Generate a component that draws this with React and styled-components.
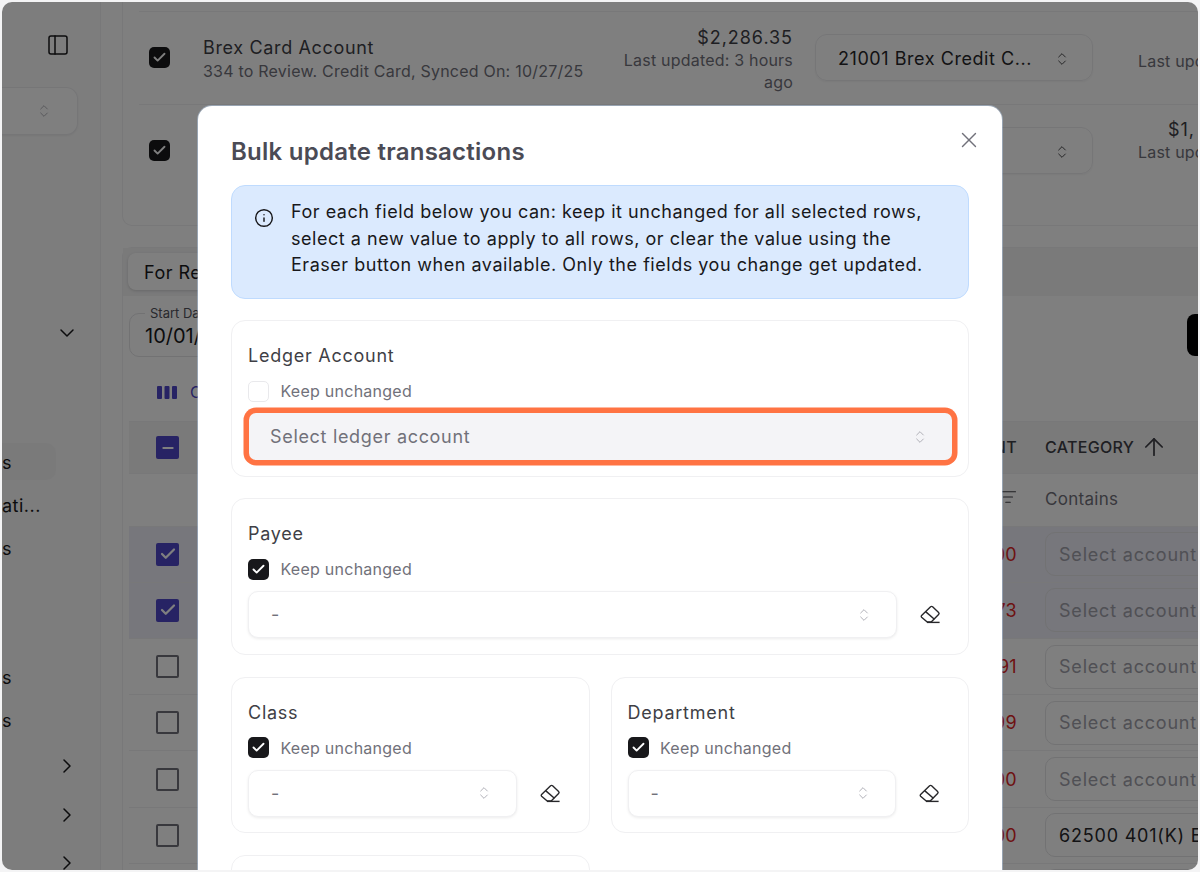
import styled, { createGlobalStyle } from "styled-components";
import { ArrowUp, Check, ChevronDown, ChevronRight, ChevronsUpDown, Info, ListFilter, Minus, PanelLeft, X } from "lucide-react";

const GlobalStyle = createGlobalStyle`
    html, body {
        margin: 0;
        padding: 0;
        background: #f4f4f5;
    }
    * {
        box-sizing: border-box;
    }
    body {
        font-family: Inter, "Liberation Sans", sans-serif;
        color: #18181b;
    }
`;

const Frame = styled.div`
    width: 1200px;
    height: 872px;
    padding: 2px;
    overflow: hidden;
`;

const Window = styled.div`
    position: relative;
    height: 868px;
    display: flex;
    overflow: hidden;
    border-radius: 10px;
    background: #fff;
`;

const Sidebar = styled.aside`
    width: 99px;
    flex-shrink: 0;
    border-right: 1px solid #f0f0f2;
    display: flex;
    flex-direction: column;
    background: #fafafa;
    font-size: 18px;
    letter-spacing: 0.5px;
    & > * {
        flex-shrink: 0;
    }
`;

const SidebarToggle = styled.div`
    height: 34px;
    margin-top: 26px;
    padding-left: 44px;
    display: flex;
    align-items: center;
`;

const SidebarSelect = styled.div`
    height: 48px;
    width: 76px;
    margin-top: 25px;
    padding-right: 25px;
    display: flex;
    align-items: center;
    justify-content: flex-end;
    background: #fff;
    border: 1px solid #ececef;
    border-left: none;
    border-radius: 0 12px 12px 0;
    box-shadow: 0 1px 2px rgba(0, 0, 0, 0.05);
    color: #a1a1aa;
`;

const SidebarChevron = styled.div`
    height: 24px;
    margin-top: ${(p) => p.$top || 0}px;
    padding-left: 53px;
    display: flex;
    align-items: center;
`;

const NavItem = styled.div`
    height: 37px;
    width: 54px;
    margin-top: ${(p) => p.$top || 6}px;
    padding-top: 1px;
    display: flex;
    align-items: center;
    border-radius: 0 10px 10px 0;
    background: ${(p) => (p.$active ? "#f4f4f5" : "transparent")};
`;

const Main = styled.main`
    flex: 1;
    min-width: 0;
    padding-left: 21px;
    overflow: hidden;
`;

const AccountsPanel = styled.section`
    width: 1100px;
    height: 224px;
    padding: 9px 0 0 16px;
    border: 1px solid #f0f0f2;
    border-top: none;
    border-radius: 0 0 10px 10px;
`;

const AccountRow = styled.div`
    height: ${(p) => p.$height}px;
    padding: 22px 0 0 10px;
    display: grid;
    grid-template-columns: 54px 410px 180px 300px 1fr;
    align-items: start;
    border-top: 1px solid #f0f0f2;
`;

const Tick = styled.span`
    width: ${(p) => p.$size || 21}px;
    height: ${(p) => p.$size || 21}px;
    margin-top: ${(p) => p.$top || 0}px;
    display: flex;
    align-items: center;
    justify-content: center;
    flex-shrink: 0;
    border-radius: ${(p) => (p.$square ? 2 : 5)}px;
    background: ${(p) => (p.$empty ? (p.$square ? "transparent" : "#fff") : p.$square ? "#4f46c8" : "#18181b")};
    border: ${(p) => (p.$empty ? (p.$square ? "2.5px solid #71717a" : "1px solid #e9e9ec") : "none")};
    color: #fff;
`;

const AccountInfo = styled.div`
    padding-top: 2px;
`;

const AccountName = styled.div`
    font-size: 18px;
    line-height: 24px;
    letter-spacing: 0.65px;
    color: #3f3f46;
`;

const AccountMeta = styled.div`
    font-size: 16px;
    line-height: 22px;
    letter-spacing: 0.22px;
    color: #71717a;
`;

const Balance = styled.div`
    text-align: right;
    margin-top: -8px;
    color: #71717a;
    font-size: 16px;
    line-height: 22px;
    letter-spacing: 0.2px;
`;

const Amount = styled.div`
    padding-left: ${(p) => p.$indent || 0}px;
    font-size: 18px;
    line-height: 23px;
    letter-spacing: 0.95px;
    color: #3f3f46;
`;

const AccountSelect = styled.div`
    width: 278px;
    height: 47px;
    margin: 0 0 0 22px;
    padding: 2px 22px 0 22px;
    display: flex;
    align-items: center;
    justify-content: space-between;
    border: 1px solid #ececef;
    border-radius: 12px;
    box-shadow: 0 1px 2px rgba(0, 0, 0, 0.05);
    font-size: 18px;
    letter-spacing: 0.55px;
    color: #27272a;
`;

const LastColumn = styled.div`
    padding-left: 45px;
    margin-top: ${(p) => p.$top}px;
    white-space: nowrap;
    color: #71717a;
    font-size: 16px;
    line-height: 22px;
    letter-spacing: 0.2px;
`;

const TablePanel = styled.section`
    width: 1100px;
    margin-top: 21px;
    border: 1px solid #f0f0f2;
    border-bottom: none;
    border-radius: 10px 10px 0 0;
`;

const TabBar = styled.div`
    height: 48px;
    padding: 5px 0 0 5px;
    background: #f4f4f5;
`;

const Tab = styled.div`
    width: 150px;
    height: 37px;
    padding: 1px 0 0 16px;
    display: flex;
    align-items: center;
    border-radius: 8px;
    background: #fff;
    box-shadow: 0 1px 3px rgba(0, 0, 0, 0.15);
    font-size: 18px;
    letter-spacing: 0.5px;
`;

const FilterBar = styled.div`
    position: relative;
    height: 125px;
    padding: 17px 0 0 6px;
`;

const DateField = styled.div`
    position: relative;
    width: 200px;
    height: 44px;
    padding: 10px 0 0 15px;
    border: 1px solid #e4e4e7;
    border-radius: 10px;
    font-size: 20px;
    line-height: 24px;
`;

const DateLabel = styled.span`
    position: absolute;
    top: -8px;
    left: 15px;
    padding: 0 5px;
    background: #fff;
    font-size: 13px;
    line-height: 15px;
    color: #52525b;
`;

const BlackButton = styled.div`
    position: absolute;
    top: 18px;
    left: 1064px;
    width: 80px;
    height: 42px;
    border-radius: 8px;
    background: #000;
`;

const ColumnsLink = styled.div`
    margin: 25px 0 0 28px;
    display: flex;
    align-items: center;
    gap: 13px;
    font-size: 16px;
    color: #4f46c8;
`;

const TableRow = styled.div`
    height: ${(p) => p.$height || 56.2}px;
    margin-left: 6px;
    padding-left: 27px;
    display: grid;
    grid-template-columns: 35px 826px 1fr;
    align-items: center;
    border-top: 1px solid #f0f0f2;
    background: ${(p) => (p.$selected ? "#eeeef8" : p.$head ? "#f4f4f5" : "transparent")};
`;

const NumberCell = styled.div`
    padding-bottom: ${(p) => (p.$head ? 2 : 0)}px;
    text-align: right;
    font-size: ${(p) => (p.$head ? 16 : 18)}px;
    font-weight: ${(p) => (p.$head ? 500 : 400)};
    letter-spacing: 0.3px;
    color: ${(p) => (p.$head ? "#3f3f46" : "#dc2626")};
`;

const HeadCell = styled.div`
    padding: 0 0 2px 28px;
    display: flex;
    align-items: center;
    gap: 6px;
    font-size: 16px;
    font-weight: 500;
    letter-spacing: 0.3px;
    color: #3f3f46;
`;

const FilterCell = styled.div`
    padding: 0 0 2px 28px;
    font-size: 17px;
    letter-spacing: 0.3px;
    color: #71717a;
`;

const AccountInput = styled.div`
    height: 44px;
    margin-left: 28px;
    padding-left: 13px;
    display: flex;
    align-items: center;
    white-space: nowrap;
    border: 1px solid #e4e4e7;
    border-radius: 10px;
    font-size: 18px;
    letter-spacing: 0.8px;
    color: ${(p) => (p.$filled ? "#27272a" : "#a1a1aa")};
`;

const Dim = styled.div`
    position: absolute;
    inset: 0;
    background: rgba(0, 0, 0, 0.5);
`;

const Modal = styled.div`
    position: absolute;
    top: 104px;
    left: 196px;
    bottom: -60px;
    width: 804px;
    padding: 30px 33px 0;
    border-radius: 14px 14px 0 0;
    background: #fff;
    box-shadow: 0 0 0 1px rgba(191, 219, 254, 0.4);
`;

const CloseButton = styled.button`
    position: absolute;
    top: 21px;
    right: 20px;
    width: 26px;
    height: 26px;
    padding: 0;
    border: none;
    background: none;
    color: #71717a;
`;

const Title = styled.h2`
    margin: 0;
    font-size: 24px;
    line-height: 32px;
    font-weight: 600;
    letter-spacing: 0.25px;
    color: #4b4b55;
`;

const Notice = styled.div`
    height: 114px;
    margin-top: 17px;
    padding: 13px 0 0 22px;
    display: flex;
    gap: 17px;
    background: #dbeafe;
    border: 1px solid #bfdbfe;
    border-radius: 14px;
    font-size: 18px;
    line-height: 26.6px;
    letter-spacing: 0.53px;
    color: #18181b;
    svg {
        margin-top: 9px;
        flex-shrink: 0;
    }
`;

const Fields = styled.div`
    margin-top: 21px;
    display: grid;
    grid-template-columns: 1fr 1fr;
    gap: 21.4px 21px;
`;

const FieldCard = styled.div`
    grid-column: ${(p) => (p.$wide ? "1 / -1" : "auto")};
    height: 156.9px;
    padding: 22px 16px 0;
    border: 1px solid #f0f0f2;
    border-radius: 14px;
`;

const FieldLabel = styled.div`
    font-size: 18px;
    line-height: 26px;
    letter-spacing: 0.75px;
    color: #3f3f46;
`;

const KeepRow = styled.label`
    margin-top: 11px;
    display: flex;
    align-items: center;
    gap: 11.5px;
    font-size: 16px;
    line-height: 22px;
    letter-spacing: 0.25px;
    color: #71717a;
`;

const SelectRow = styled.div`
    margin-top: 11px;
    display: flex;
    align-items: center;
    gap: 23px;
`;

const Select = styled.div`
    flex: 1;
    height: 47px;
    margin-left: ${(p) => (p.$focus ? 1 : 0)}px;
    padding: 0 24px 0 ${(p) => (p.$focus ? 21 : 22)}px;
    display: flex;
    align-items: center;
    justify-content: space-between;
    border: ${(p) => (p.$focus ? "none" : "1px solid #f0f0f2")};
    border-radius: ${(p) => (p.$focus ? 7 : 10)}px;
    background: ${(p) => (p.$focus ? "#f4f4f7" : "#fff")};
    box-shadow: ${(p) => (p.$focus ? "0 0 0 5.5px #ff7343" : "0 1px 3px rgba(0, 0, 0, 0.08)")};
    font-size: 18px;
    letter-spacing: ${(p) => (p.$focus ? 0.68 : 0.3)}px;
    color: #71717a;
    svg {
        color: #a1a1aa;
    }
`;

const EraserButton = styled.span`
    width: 21px;
    margin-right: ${(p) => (p.$half ? 12 : 11)}px;
    display: flex;
    color: #27272a;
`;

const Updown = () => <ChevronsUpDown size={16} strokeWidth={1.25} />;

const Eraser = () => (
    <svg width="21" height="21" viewBox="0 0 21 21" fill="none" stroke="currentColor" strokeWidth="1.4" strokeLinejoin="round">
        <path d="M1.6 11.4 10.6 2.8c.6-.5 1.4-.5 2 0l6 5.6c.6.6.6 1.4 0 2l-7.4 7.6H7.2L1.6 13.2c-.5-.5-.5-1.3 0-1.8Z" />
        <path d="M5.6 7.6 14.4 15.2" />
        <path d="M7 18.4h12.6" />
    </svg>
);

const ColumnsIcon = () => (
    <svg width="20" height="13" viewBox="0 0 20 13" fill="currentColor">
        <rect x="0" width="5" height="13" rx="1" />
        <rect x="7.5" width="5" height="13" rx="1" />
        <rect x="15" width="5" height="13" rx="1" />
    </svg>
);

const Field = ({ label, keep, wide, focus, placeholder = "-", eraser = true }) => (
    <FieldCard $wide={wide}>
        <FieldLabel>{label}</FieldLabel>
        <KeepRow>
            <Tick $empty={!keep}>{keep && <Check size={15} strokeWidth={3} />}</Tick>
            Keep unchanged
        </KeepRow>
        <SelectRow>
            <Select $focus={focus}>
                {placeholder}
                <Updown />
            </Select>
            {eraser && (
                <EraserButton $half={!wide}>
                    <Eraser />
                </EraserButton>
            )}
        </SelectRow>
    </FieldCard>
);

const rows = [
    { value: "00", selected: true },
    { value: "73", selected: true },
    { value: "91" },
    { value: "99" },
    { value: "00" },
    { value: "00", account: "62500 401(K) Expense" },
    { value: "00" },
];

const App = () => (
    <>
        <GlobalStyle />
        <Frame>
            <Window>
                <Sidebar>
                    <SidebarToggle>
                        <PanelLeft size={24} strokeWidth={1.5} />
                    </SidebarToggle>
                    <SidebarSelect>
                        <Updown />
                    </SidebarSelect>
                    <SidebarChevron $top={186}>
                        <ChevronDown size={24} strokeWidth={1.5} />
                    </SidebarChevron>
                    <NavItem $active $top={98}>s</NavItem>
                    <NavItem>ati...</NavItem>
                    <NavItem>s</NavItem>
                    <NavItem $top={92}>s</NavItem>
                    <NavItem>s</NavItem>
                    <SidebarChevron $top={16}>
                        <ChevronRight size={24} strokeWidth={1.5} />
                    </SidebarChevron>
                    <SidebarChevron $top={25}>
                        <ChevronRight size={24} strokeWidth={1.5} />
                    </SidebarChevron>
                    <SidebarChevron $top={24}>
                        <ChevronRight size={24} strokeWidth={1.5} />
                    </SidebarChevron>
                </Sidebar>
                <Main>
                    <AccountsPanel>
                        <AccountRow $height={93}>
                            <Tick $top={13}><Check size={15} strokeWidth={3} /></Tick>
                            <AccountInfo>
                                <AccountName>Brex Card Account</AccountName>
                                <AccountMeta>334 to Review. Credit Card, Synced On: 10/27/25</AccountMeta>
                            </AccountInfo>
                            <Balance>
                                <Amount>$2,286.35</Amount>
                                Last updated: 3 hours ago
                            </Balance>
                            <AccountSelect>
                                21001 Brex Credit C...
                                <Updown />
                            </AccountSelect>
                            <LastColumn $top={16}>Last updated: 3 hours ago</LastColumn>
                        </AccountRow>
                        <AccountRow $height={121}>
                            <Tick $top={13}><Check size={15} strokeWidth={3} /></Tick>
                            <div />
                            <div />
                            <AccountSelect>
                                <span />
                                <Updown />
                            </AccountSelect>
                            <LastColumn $top={-9}>
                                <Amount $indent={30}>$1,</Amount>
                                Last updated
                            </LastColumn>
                        </AccountRow>
                    </AccountsPanel>
                    <TablePanel>
                        <TabBar>
                            <Tab>For Review</Tab>
                        </TabBar>
                        <FilterBar>
                            <DateField>
                                <DateLabel>Start Date</DateLabel>
                                10/01/2025
                            </DateField>
                            <BlackButton />
                            <ColumnsLink>
                                <ColumnsIcon />
                                Columns
                            </ColumnsLink>
                        </FilterBar>
                        <TableRow $head $height={52}>
                            <Tick $square $size={23}><Minus size={16} strokeWidth={3} /></Tick>
                            <NumberCell $head>AMOUNT</NumberCell>
                            <HeadCell>
                                CATEGORY
                                <ArrowUp size={28} strokeWidth={1.5} />
                            </HeadCell>
                        </TableRow>
                        <TableRow $height={52.7}>
                            <span />
                            <NumberCell $head>
                                <ListFilter size={18} strokeWidth={1.5} />
                            </NumberCell>
                            <FilterCell>Contains</FilterCell>
                        </TableRow>
                        {rows.map((row, i) => (
                            <TableRow key={i} $selected={row.selected}>
                                <Tick $square $size={23} $empty={!row.selected}>
                                    {row.selected && <Check size={18} strokeWidth={3} />}
                                </Tick>
                                <NumberCell>{row.value}</NumberCell>
                                <AccountInput $filled={row.account}>{row.account || "Select account"}</AccountInput>
                            </TableRow>
                        ))}
                    </TablePanel>
                </Main>
                <Dim />
                <Modal>
                    <CloseButton>
                        <X size={26} strokeWidth={1.25} />
                    </CloseButton>
                    <Title>Bulk update transactions</Title>
                    <Notice>
                        <Info size={20} strokeWidth={1.75} />
                        <div>
                            For each field below you can: keep it unchanged for all selected rows,
                            <br />
                            select a new value to apply to all rows, or clear the value using the
                            <br />
                            Eraser button when available. Only the fields you change get updated.
                        </div>
                    </Notice>
                    <Fields>
                        <Field wide focus label="Ledger Account" placeholder="Select ledger account" eraser={false} />
                        <Field wide keep label="Payee" />
                        <Field keep label="Class" />
                        <Field keep label="Department" />
                        <FieldCard />
                    </Fields>
                </Modal>
            </Window>
        </Frame>
    </>
);

export default App;
